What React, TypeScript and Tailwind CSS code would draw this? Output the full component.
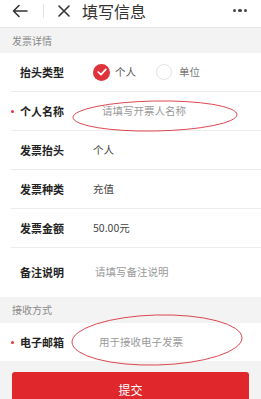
import React from "react";

const font = { fontFamily: '"Noto Sans CJK SC", "Noto Sans", sans-serif' };

function Row({
  label,
  required,
  children,
  h = "h-[39px]",
  last,
}: {
  label: string;
  required?: boolean;
  children: React.ReactNode;
  h?: string;
  last?: boolean;
}) {
  return (
    <div className="bg-white">
      <div className={`ml-[11px] flex items-center ${h} ${last ? "" : "border-b border-[#ececec]"}`}>
        <div className="w-[9px] flex items-center">
          {required && <span className="block w-[3px] h-[3px] rounded-full bg-[#e0393b]" />}
        </div>
        <div className="w-[73px] text-[11px] font-bold text-[#222] leading-none">{label}</div>
        <div className="flex-1 text-[10.5px] text-[#444] leading-none flex items-center">{children}</div>
      </div>
    </div>
  );
}

export default function App() {
  return (
    <div className="relative w-[261px] h-[399px] overflow-hidden bg-[#f3f3f3]" style={font}>
      {/* header */}
      <div className="bg-white h-[28px] border-b border-[#e6e6e6] flex items-start">
        <div className="h-[21px] w-full flex items-center">
          <svg className="ml-[12px]" width="16" height="14" viewBox="0 0 16 14" fill="none" stroke="#333" strokeWidth="1.6" strokeLinecap="round" strokeLinejoin="round">
            <path d="M15 7H1.5M7 1.5L1.5 7L7 12.5" />
          </svg>
          <div className="ml-[15px] w-px h-[14px] bg-[#e2e2e2]" />
          <svg className="ml-[14px]" width="12" height="12" viewBox="0 0 12 12" fill="none" stroke="#333" strokeWidth="1.6" strokeLinecap="round">
            <path d="M1 1L11 11M11 1L1 11" />
          </svg>
          <div className="ml-[12px] text-[16px] text-[#333] leading-none">填写信息</div>
          <div className="ml-auto mr-[14px] flex gap-[2px]">
            <span className="block w-[3.5px] h-[3.5px] rounded-full bg-[#444]" />
            <span className="block w-[3.5px] h-[3.5px] rounded-full bg-[#444]" />
            <span className="block w-[3.5px] h-[3.5px] rounded-full bg-[#444]" />
          </div>
        </div>
      </div>

      {/* section title */}
      <div className="h-[25px] flex items-center pl-[12px] text-[10px] text-[#888] leading-none">发票详情</div>

      <Row label="抬头类型">
        <span className="w-[17px] h-[17px] rounded-full bg-[#e0323a] flex items-center justify-center">
          <svg width="10" height="8" viewBox="0 0 10 8" fill="none" stroke="#fff" strokeWidth="1.7" strokeLinecap="round" strokeLinejoin="round">
            <path d="M1.2 4L4 6.6L8.8 1.4" />
          </svg>
        </span>
        <span className="ml-[5px] text-[#555]">个人</span>
        <span className="ml-[20px] w-[16px] h-[16px] rounded-full border border-[#e3e3e3]" />
        <span className="ml-[7px] text-[#777]">单位</span>
      </Row>
      <Row label="个人名称" required>
        <span className="ml-[9px] text-[#999]">请填写开票人名称</span>
      </Row>
      <Row label="发票抬头">
        <span>个人</span>
      </Row>
      <Row label="发票种类">
        <span>充值</span>
      </Row>
      <Row label="发票金额">
        <span>50.00元</span>
      </Row>
      <Row label="备注说明" h="h-[49px]" last>
        <span className="ml-[2px] text-[#999]">请填写备注说明</span>
      </Row>

      <div className="h-[26px] flex items-center pl-[12px] text-[10px] text-[#888] leading-none">接收方式</div>

      <Row label="电子邮箱" required h="h-[38px]" last>
        <span className="ml-[6px] text-[#999]">用于接收电子发票</span>
      </Row>

      <div className="px-[12px] pt-[11px]">
        <div className="h-[34px] rounded-[3px] bg-[#e0282c] flex items-start justify-center pt-[12px]">
          <span className="text-white text-[12px] leading-none">提交</span>
        </div>
      </div>

      <svg className="absolute inset-0 pointer-events-none" width="261" height="399" viewBox="0 0 261 399" fill="none">
        <ellipse cx="155" cy="116" rx="82" ry="15" stroke="#d8363f" strokeWidth="0.9" transform="rotate(-1 155 116)" />
        <ellipse cx="157" cy="340" rx="85" ry="25" stroke="#d8363f" strokeWidth="0.9" transform="rotate(-1.5 157 340)" />
      </svg>
    </div>
  );
}
